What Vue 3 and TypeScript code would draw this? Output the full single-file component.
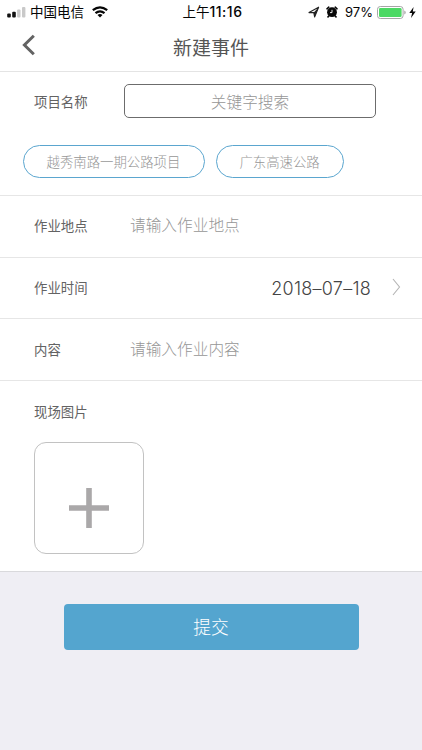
<script setup lang="ts">
import { ref } from 'vue'

const projects: string[] = ['越秀南路一期公路项目', '广东高速公路']
const keyword = ref('')
const place = ref('')
const content = ref('')
const date = ref('2018–07–18')
</script>

<template>
  <div class="screen">
    <div class="status">
      <div class="left">
        <svg class="signal" width="20" height="11" viewBox="0 0 20 11">
          <rect x="0.2" y="6.4" width="3.6" height="4" rx="1" fill="#111" />
          <rect x="5.2" y="4.8" width="3.6" height="5.6" rx="1" fill="#111" />
          <rect x="10.1" y="2.6" width="3.4" height="7.8" rx="1" fill="#c9c9c9" />
          <rect x="15" y="0" width="3.4" height="10.4" rx="1" fill="#c9c9c9" />
        </svg>
        <span class="carrier">中国电信</span>
        <svg class="wifi" width="16" height="12" viewBox="0 0 16 12">
          <g fill="none" stroke="#050505" stroke-width="2.2">
            <path d="M0.8 4.2Q8-1.6 15.2 4.2" />
            <path d="M3.5 7.2Q8 3.4 12.5 7.2" />
          </g>
          <path d="M5.5 9Q8 7 10.5 9L8 11.4Z" fill="#050505" />
        </svg>
      </div>
      <div class="clock">上午<span class="digits">11:16</span></div>
      <div class="right">
        <svg class="arrow" width="12" height="12" viewBox="0 0 12 12">
          <path d="M1 6.6L10.6 1.2L6.6 11L5.8 6.6Z" fill="none" stroke="#222" stroke-width="1.1" stroke-linejoin="round" />
          <path d="M10.6 1.2L5.8 6.6L6.6 11Z" fill="#222" />
        </svg>
        <svg class="alarm" width="12" height="12" viewBox="0 0 12 12">
          <circle cx="6" cy="6.2" r="4.9" fill="#080808" />
          <path d="M1 2.8L2.8 1.2M9.2 1.2L11 2.8M2.8 10L2 10.9M9.2 10L10 10.9" stroke="#080808" stroke-width="1.6" stroke-linecap="round" />
          <path d="M6 3.8V6.6H4" fill="none" stroke="#fff" stroke-width="0.9" />
        </svg>
        <span class="percent">97%</span>
        <svg class="battery" width="29" height="13" viewBox="0 0 29 13">
          <rect x="0.5" y="0.5" width="25.6" height="12" rx="2.8" fill="#fff" stroke="#a6a6a6" />
          <rect x="2" y="2" width="22.6" height="9" rx="1.3" fill="#4cd964" />
          <path d="M27.4 4.6Q28.6 5 28.6 6.5T27.4 8.4Z" fill="#999" />
        </svg>
        <svg class="bolt" width="7" height="11" viewBox="0 0 7 11">
          <path d="M4.6 0L0.3 6H3.1L2 11L6.7 4.6H3.8Z" fill="#080808" />
        </svg>
      </div>
    </div>

    <header class="nav">
      <svg class="back" width="14" height="22" viewBox="0 0 14 22">
        <path d="M11.8 1.7L2.4 11L11.8 20.3" fill="none" stroke="#636363" stroke-width="3" />
      </svg>
      <h1>新建事件</h1>
    </header>

    <section class="project">
      <div class="search-row">
        <label>项目名称</label>
        <input v-model="keyword" class="search" placeholder="关键字搜索" />
      </div>
      <div class="tags">
        <span v-for="name in projects" :key="name" class="tag">{{ name }}</span>
      </div>
    </section>

    <section class="row">
      <label>作业地点</label>
      <input v-model="place" class="field" placeholder="请输入作业地点" />
    </section>
    <section class="row time">
      <label>作业时间</label>
      <span class="date">{{ date }}</span>
      <svg class="chevron" width="9" height="18" viewBox="0 0 9 18">
        <path d="M1 1L7.5 9L1 17" fill="none" stroke="#b5b5b5" stroke-width="1.1" />
      </svg>
    </section>
    <section class="row content">
      <label>内容</label>
      <input v-model="content" class="field" placeholder="请输入作业内容" />
    </section>

    <section class="photos">
      <label>现场图片</label>
      <button class="upload" aria-label="添加">
        <svg width="40" height="40" viewBox="0 0 40 40">
          <path d="M20 0V40M0 20H40" stroke="#aaa8a9" stroke-width="5.6" />
        </svg>
      </button>
    </section>

    <footer>
      <button class="submit">提交</button>
    </footer>
  </div>
</template>

<style>
body {
  margin: 0;
  background: #efeef4;
}
</style>

<style scoped>
.screen,
.screen * {
  box-sizing: border-box;
}
.screen {
  width: 422px;
  height: 750px;
  display: flex;
  flex-direction: column;
  background: #efeef4;
  color: #555;
  font-family: Inter, "Noto Sans CJK SC", sans-serif;
  overflow: hidden;
}
input,
button {
  font-family: inherit;
  outline: none;
  margin: 0;
}
svg {
  display: block;
  flex: none;
}
.status {
  height: 24px;
  flex: none;
  display: grid;
  grid-template-columns: 1fr auto 1fr;
  align-items: center;
  background: #fff;
  color: #050505;
  font-size: 13.5px;
  line-height: 24px;
}
.left,
.right {
  display: flex;
  align-items: center;
}
.left {
  padding-left: 7px;
}
.signal {
  margin-top: 1px;
}
.carrier {
  margin-left: 3px;
}
.wifi {
  margin-left: 8px;
}
.clock {
  margin-left: 3px;
  font-size: 13.5px;
  font-weight: 400;
}
.digits {
  font-weight: 500;
  font-size: 14px;
  letter-spacing: 0.5px;
}
.right {
  justify-content: flex-end;
  padding-right: 6px;
}
.alarm {
  margin-left: 6px;
}
.percent {
  margin-left: 7px;
  font-size: 13px;
}
.battery {
  margin-left: 4px;
}
.bolt {
  margin-left: 3px;
}
.nav {
  height: 48px;
  flex: none;
  display: grid;
  grid-template-columns: 1fr auto 1fr;
  align-items: center;
  background: #fff;
  border-bottom: 1px solid #e4e4e4;
  padding-left: 22px;
  padding-right: 22px;
}
.back {
  margin-top: -6px;
}
h1 {
  margin: 2px 0 0;
  font-size: 19px;
  line-height: 28px;
  font-weight: 400;
  color: #555;
}
label {
  width: 90px;
  flex: none;
  font-size: 13.4px;
  line-height: 20px;
  color: #636363;
}
.project {
  height: 124px;
  flex: none;
  background: #fff;
  border-bottom: 1px solid #e6e6e6;
  padding-top: 12px;
}
.search-row {
  display: flex;
  align-items: center;
  padding-left: 34px;
}
.search-row label {
  padding-top: 2px;
}
.search {
  width: 252px;
  height: 34px;
  border: 1px solid #6c6c6c;
  border-radius: 5px;
  background: #fff;
  padding: 2px 0 0;
  text-align: center;
  font-size: 15.7px;
}
.tags {
  display: flex;
  gap: 11px;
  padding: 27px 0 0 23px;
}
.tag {
  height: 33px;
  padding: 1px 23.5px 0 22.5px;
  border: 1px solid #5ba6cf;
  border-radius: 17px;
  font-size: 13.4px;
  font-weight: 300;
  line-height: 31px;
  color: #969696;
}
.row {
  height: 62px;
  flex: none;
  display: flex;
  align-items: center;
  background: #fff;
  border-bottom: 1px solid #e6e6e6;
  padding-left: 34px;
  padding-bottom: 2px;
}
.content {
  padding-bottom: 0;
}
.field {
  width: 230px;
  height: 30px;
  margin-left: 6px;
  padding: 0;
  border: 0;
  background: transparent;
  font-size: 15.7px;
}
input::placeholder {
  color: #969696;
  font-weight: 300;
  opacity: 1;
}
.time {
  height: 61px;
  padding-right: 21px;
  padding-bottom: 0;
}
.date {
  margin-left: auto;
  padding-top: 2px;
  font-size: 18px;
  font-weight: 300;
  line-height: 24px;
  letter-spacing: 0.25px;
  color: #444;
}
.chevron {
  margin-left: 21px;
  margin-top: -3px;
}
.photos {
  height: 191px;
  flex: none;
  display: flex;
  flex-direction: column;
  background: #fff;
  border-bottom: 1px solid #d9d9dc;
  padding: 21px 34px 0;
}
.upload {
  width: 110px;
  height: 112px;
  margin-top: 20px;
  padding: 20px 0 0;
  border: 1px solid #c2c2c2;
  border-radius: 12px;
  background: #fff;
  display: flex;
  align-items: center;
  justify-content: center;
}
footer {
  display: flex;
  justify-content: center;
  padding-top: 32px;
}
.submit {
  width: 295px;
  height: 46px;
  border: 0;
  border-radius: 4px;
  padding: 0 0 2px;
  background: #54a5cf;
  color: #fff;
  font-size: 17.8px;
  font-weight: 300;
}
</style>
